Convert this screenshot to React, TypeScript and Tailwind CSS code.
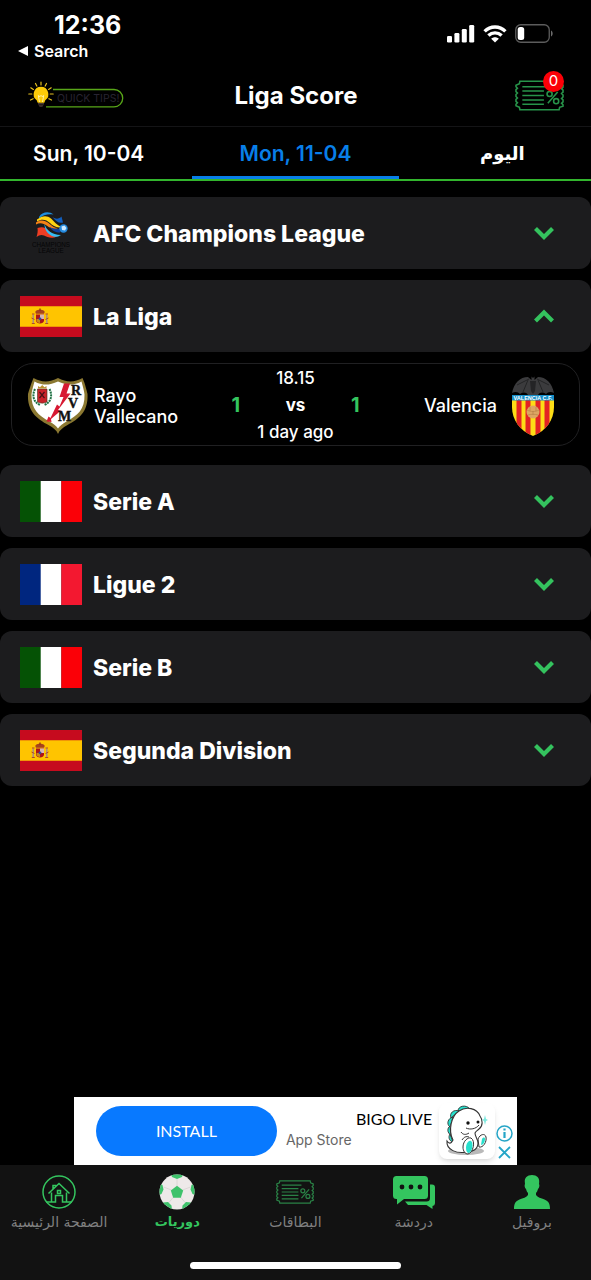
import type { ReactNode } from "react";

const LATIN = "font-['Inter','DejaVu_Sans',sans-serif]";
const ARABIC = "font-['DejaVu_Sans',sans-serif]";

function SignalIcon() {
  return (
    <svg width="28" height="18" viewBox="0 0 28 18" fill="#fff" aria-hidden="true">
      <rect x="0" y="11" width="5" height="6.5" rx="1.3" />
      <rect x="7.4" y="8" width="5" height="9.5" rx="1.3" />
      <rect x="14.8" y="4" width="5" height="13.5" rx="1.3" />
      <rect x="22.2" y="0" width="5" height="17.5" rx="1.3" />
    </svg>
  );
}

function WifiIcon() {
  return (
    <svg width="24" height="18" viewBox="0 0 24 18" fill="none" stroke="#fff" strokeWidth="3.4" aria-hidden="true">
      <path d="M1.600 6.400C7.400.6 16.600.6 22.400 6.400" />
      <path d="M5.400 10.600C9.200 7 14.800 7 18.600 10.600" />
      <path d="M8.200 13.800C10.400 11.800 13.600 11.800 15.800 13.800L12 17.500z" fill="#fff" stroke="none" />
    </svg>
  );
}

function BatteryIcon() {
  return (
    <svg width="38" height="19" viewBox="0 0 38 19" aria-hidden="true">
      <rect x="0.75" y="0.75" width="33.500" height="17.500" rx="5" fill="none" stroke="#5c5c5c" strokeWidth="1.3" />
      <rect x="2.700" y="3" width="6.500" height="13" rx="2.500" fill="#fff" />
      <path d="M36 6.500c2.200.8 2.200 5.200 0 6z" fill="#6b6b6b" />
    </svg>
  );
}

function QuickTipsIcon() {
  return (
    <svg width="96" height="28" viewBox="0 0 96 28" aria-hidden="true">
      <path d="M25 8.500H86a8.700 8.700 0 0 1 0 17.400H18" fill="none" stroke="#58a618" strokeWidth="1.300" />
      <g stroke="#e5c021" strokeWidth="1.200" strokeLinecap="round">
        <path d="M13 1v3M7.500 2.500l1.300 2.600M18.500 2.500l-1.300 2.600M2.800 6.800l2.600 1.600M23.200 6.800l-2.600 1.600M.8 13h3M25.200 13h-3M2.500 19l2.600-1.300M23.500 19l-2.600-1.300" />
      </g>
      <path d="M13 5.800a7.400 7.400 0 0 0-4.300 13.400l1 2.600h6.600l1-2.600A7.400 7.400 0 0 0 13 5.800z" fill="#fccb08" />
      <path d="M11.500 21l-1.200-6.500 1.700 1.200 1-1.400 1 1.400 1.700-1.200-1.200 6.500" fill="none" stroke="#fff0a0" strokeWidth="1" />
      <path d="M10 22h6v1.500h-6zM10.500 24.200h5l-1.200 1.600h-2.600z" fill="#4b3a35" />
      <text x="29" y="20.500" fontSize="10.500" fill="#282431" fontFamily="Inter, sans-serif">QUICK TIPS!</text>
    </svg>
  );
}

function TicketIcon({ className }: { className: string }) {
  return (
    <svg className={className} viewBox="0 0 50 31" fill="none" stroke="currentColor" strokeWidth="1.600" aria-hidden="true">
      <path d="M5 1H45L45.500 3.500 49 5v2l-1.500 1.500L49 10v2l-1.500 1.500L49 15v2l-1.500 1.500L49 20v2l-1.500 1.500L49 25v1.500L45.500 27.500 45 30H5L4.500 27.500 1 26V24.500L2.500 23 1 21.500v-2L2.500 18 1 16.500v-2L2.500 13 1 11.500v-2L2.500 8 1 6.500V5L4.500 3.500z" />
      <path d="M7.500 6.500h26M7.500 11h22M7.500 15.500h22M7.500 20h22M7.500 24.500h22" />
      <path d="M33.500 23.500L43.500 12" />
      <circle cx="35.300" cy="14" r="2.600" />
      <circle cx="42" cy="21.300" r="2.600" />
    </svg>
  );
}

function SpainFlag() {
  return (
    <svg width="62" height="41" viewBox="0 0 62 41" aria-hidden="true">
      <path fill="#c60b1e" d="M0 0h62v41H0z" />
      <path fill="#ffc400" d="M0 10.300h62v20.400H0z" />
      <path d="M16 18.500h8v6c0 4-8 4-8 0z" fill="#ad1519" />
      <path d="M20 18.500h4V23h-4z" fill="#d6b5b4" />
      <path d="M16.500 23h3.500v4c-2 0-3.500-1-3.500-2.500z" fill="#c8891c" />
      <circle cx="20" cy="22.800" r="1.400" fill="#354f93" />
      <path d="M16 17.800c-2-3 1-4 4-4s6 1 4 4z" fill="#a7431d" />
      <path d="M19.400 12.600h1.200v2h-1.200z" fill="#8b1c1a" />
      <path d="M13.200 18.500v8.500M26.800 18.500v8.500" stroke="#aa8f83" strokeWidth="1.500" />
      <path d="M12 18h2.500M25.500 18h2.500M11.800 27.500h3M25.200 27.500h3M11.500 22l3 1.500M28.500 22l-3 1.500" stroke="#b2492a" strokeWidth="1" />
    </svg>
  );
}

function StripeFlag({ colors }: { colors: [string, string, string] }) {
  return (
    <svg width="62" height="41" viewBox="0 0 62 41" aria-hidden="true">
      <path fill={colors[0]} d="M0 0h21v41H0z" />
      <path fill={colors[1]} d="M20.700 0h20.700v41H20.700z" />
      <path fill={colors[2]} d="M41.300 0H62v41H41.300z" />
    </svg>
  );
}

function AfcLogo() {
  return (
    <svg width="62" height="42" viewBox="0 0 62 42" aria-hidden="true">
      <path d="M19 5C22-.2 29-1 33.500 2.500 28 1.500 23 3 19 6.500z" fill="#1e8fe0" />
      <path d="M17 7.500C22 3.500 27 3 31 6.500c3.500 3.500 6 7 11 8.500-5 1.500-9-1-12-4-4-3.500-8-4.500-13-1.500z" fill="#ffd313" />
      <path d="M16 10.500c4-3 9-2.500 12.500.5 3.500 3 6 5 9.500 5-4 2-8 0-11-2.200-3.500-2.500-7-3.300-11-1.300z" fill="#f58216" />
      <path d="M32.500 5c3.500 2.500 6.500 2 9-.5L43 10.500c-4 1-7-1-10.500-5.500z" fill="#125ebd" />
      <path d="M17.500 16c4.500-1.500 8.500-.5 10.500 2 3 3.500 5 5.500 9 6.500-5 2.500-10 .5-13-1-2.500-1.200-5-.5-7.500 1.500 1-3 1.500-6 1-9z" fill="#ef3d23" />
      <path d="M24.500 12c2 6.500 7 10.500 16.500 11-3 2-5.500 2.200-7.500 1.500-6-2-9-6.500-9-12.500z" fill="#35bdf5" />
      <path d="M29.500 15c4 2 8 2.500 11 1l-.5 4.500c-4.500 0-7.500-1.500-10.500-5.500z" fill="#103f9c" />
      <circle cx="43.500" cy="16.500" r="4.200" fill="#248ade" />
      <path d="M41.500 14.500l3-1 2 2.500-1.500 2.500-3-.5z" fill="#cfeaff" />
      <g fill="#050506" fontFamily="Liberation Sans, sans-serif" fontSize="6.300" textAnchor="middle">
        <text x="31" y="35">CHAMPIONS</text>
        <text x="31" y="41">LEAGUE</text>
      </g>
    </svg>
  );
}

function RayoCrest() {
  return (
    <svg width="62" height="58" viewBox="0 0 62 58" aria-hidden="true">
      <path d="M6.500 1c8 4.500 16 4.500 24.500 0 8.500 4.500 16.500 4.500 24.500 0l2 5c1 3 2 7 3 11 1 18-9 25-20 31-5 3-8 5-9.500 9-1.500-4-4.500-6-9.500-9C10 42 0 34 1 17 2 13 3.500 9 4.500 6z" fill="#8b7831" />
      <path d="M7.500 4.500c8 4.300 15 4 23.500 0 8.500 4 15.500 4.300 23.500 0 1 4 2.500 8 3 13 .5 15-7 21-18 27-4 2.200-7 4.500-8.500 7-1.500-2.500-4.500-4.800-8.500-7C11.500 38.500 4 32 4.500 17.500c.5-5 2-9 3-13z" fill="#fff" />
      <path d="M37 6.500h6l-3.500 10h4L31 33l3 .5-10 8.500.5 3-5-.5 2-5 2 1.500 6.500-13.500 2.500 2 4-9.500h-4z" fill="#d71932" />
      <path d="M10.500 12h9.500v13c-3 1.500-6.500 1.500-9.500 0z" fill="#c9222c" stroke="#463719" strokeWidth=".6" />
      <path d="M11 11.500V9l2 1.200L15.200 8l2.300 2.200L19.500 9v2.500z" fill="#ba9131" />
      <path d="M12.500 15l5 6m0-6l-5 6" stroke="#481218" strokeWidth="1.200" />
      <path d="M8 12c-3 6-2 13 5 16M22.500 12c3 6 2 13-5 16" fill="none" stroke="#207245" strokeWidth="2" strokeDasharray="2 .8" />
      <g fill="#111" stroke="#111" strokeWidth=".4" fontFamily="Liberation Serif, serif" fontWeight="700" fontSize="14">
        <text x="44" y="18">R</text>
        <text x="41" y="31">V</text>
        <text x="31" y="44">M</text>
      </g>
    </svg>
  );
}

function ValenciaCrest() {
  return (
    <svg width="44" height="61" viewBox="0 0 44 61" aria-hidden="true">
      <defs>
        <clipPath id="shield">
          <path d="M1 25h42v7c0 13-8 24-21 29C9 56 1 45 1 32z" />
        </clipPath>
      </defs>
      <path d="M1 18C3 8 9 2 17 2l3.500 3V1.500L22 3l1.500-1.500V5L27 2c8 0 14 6 16 16-4-2-6-1-8 1-3-2-6-2-8 1l-5 1-5-1c-2-3-5-3-8-1-2-2-4-3-8-1z" fill="#3b3b3d" />
      <path d="M18 4L6 10M17 5l-5 12M26 4l12 6M27 5l5 12" stroke="#232425" strokeWidth="1" />
      <path d="M19 6h6l-1 10-2 3-2-3z" fill="#242426" />
      <g clipPath="url(#shield)">
        <path d="M0 24h44v37H0z" fill="#fddd16" />
        <path d="M5.500 24h5v37h-5zM14.500 24h5v37h-5zM24.500 24h5v37h-5zM33.500 24h5v37h-5z" fill="#e32324" />
      </g>
      <path d="M1 20h42v5.500H1z" fill="#168fc9" />
      <text x="22" y="25" fill="#fff" fontFamily="Liberation Sans, sans-serif" fontWeight="700" fontSize="5.500" textAnchor="middle">VALENCIA C.F.</text>
      <circle cx="22" cy="37" r="6.500" fill="#dca663" />
      <path d="M16 35c4 2 8 2 12 0M17 40c3-1 7-1 10 0M22 36v4M19 32v4M25 32v4" fill="none" stroke="#b98248" strokeWidth=".7" />
    </svg>
  );
}

function Chevron({ open }: { open: boolean }) {
  return (
    <svg width="22" height="14" viewBox="0 0 22 14" fill="none" stroke="#34c25e" strokeWidth="4.200" aria-hidden="true">
      <path d={open ? "M2.500 12L11 3.500 19.500 12" : "M2.500 2.500L11 11 19.500 2.500"} />
    </svg>
  );
}

function HomeIcon() {
  return (
    <svg width="34" height="34" viewBox="0 0 34 34" fill="none" stroke="#34c55f" strokeWidth="1.500" aria-hidden="true">
      <circle cx="17" cy="17" r="16" />
      <path d="M6.500 18.500L17 8.500l10.500 10M11 14v-3.500h2.500v1.500M4 27h5.500v-9.500M30 27h-5.500v-9.500M9.500 27h4v-6.500h7V27h4" />
      <rect x="15.500" y="15.500" width="3" height="3" />
    </svg>
  );
}

function BallIcon() {
  return (
    <svg width="36" height="36" viewBox="0 0 36 36" aria-hidden="true">
      <defs>
        <clipPath id="ball"><circle cx="18" cy="18" r="17.500" /></clipPath>
      </defs>
      <g clipPath="url(#ball)">
        <path fill="#eee9e9" d="M0 0h36v36H0z" />
        <path d="M18 12V4M23.500 16l8-3M21.500 23l5 6M14.500 23l-5 6M12.500 16l-8-3" stroke="#dcd6d6" strokeWidth="1" />
        <path d="M18 11.800l6.200 4.600-2.400 7.300h-7.600l-2.400-7.300z" fill="#3ec26b" />
        <path d="M12 0h12l-1 3-5 2-5-2zM36 9v12l-2.500-1-2-4.500 1-4.500zM0 9v12l2.500-1 2-4.500-1-4.500zM23 36l.5-4.500 3.500-3.500 5 .5-3 7.500zM13 36l-.5-4.500L9 28l-5 .5L7 36z" fill="#3ec26b" />
      </g>
    </svg>
  );
}

function ChatIcon() {
  return (
    <svg width="42" height="34" viewBox="0 0 42 34" aria-hidden="true">
      <path d="M37 9.500H39a3 3 0 0 1 3 3V28a3 3 0 0 1-2.500 3V34l-6-4H15l-3-3.500h21.500a3.500 3.500 0 0 0 3.500-3.500z" fill="#34c55f" />
      <path d="M3.500 1h28A3.500 3.500 0 0 1 35 4.500v16a3.500 3.500 0 0 1-3.500 3.500H11l-7 5.500V24h-.5A3.500 3.500 0 0 1 0 20.500v-16A3.500 3.500 0 0 1 3.500 1z" fill="#34c55f" />
      <g fill="#121212">
        <circle cx="9" cy="12" r="2.400" />
        <circle cx="18" cy="12" r="2.400" />
        <circle cx="27" cy="12" r="2.400" />
      </g>
    </svg>
  );
}

function ProfileIcon() {
  return (
    <svg width="36" height="34" viewBox="0 0 36 34" fill="#34c55f" aria-hidden="true">
      <path d="M18 0c5 0 7.500 3 7.200 7l-.2 2c.8 1 .3 4-1 5-.5 2-1.200 3-2 4v2c1.500 2.500 5 3 8.500 4.500 4 1.700 5.500 4 5.500 9.500H0c0-5.500 1.500-7.800 5.500-9.500C9 23 12.500 22.500 14 20v-2c-.8-1-1.500-2-2-4-1.300-1-1.800-4-1-5l-.2-2c-.3-4 2.200-7 7.200-7z" />
    </svg>
  );
}

function DinoLogo() {
  return (
    <svg width="56" height="56" viewBox="0 0 56 56" aria-hidden="true">
      <ellipse cx="27" cy="48" rx="18" ry="4" fill="#b9b9b9" />
      <g fill="#27dfcc" stroke="#333" strokeWidth=".9">
        <path d="M19 8c0-5 8-7 12-2zM12 15c-2-5 3-9 8-7zM11 24c-4-3-2-9 3-10zM12 32c-4-2-4-7-1-9zM14 39c-4-1-5-5-3-8z" />
      </g>
      <path d="M14 37C9 28 12 13 20 8c7-5 18-3 21 5 3 4 3 10-1 13-2 2-3 2-4 4 0 4 3 6 3 10 0 6-5 9-11 9-10 2-21-2-20-11 2 3 4 3 6-1z" fill="#fff" stroke="#333" strokeWidth="1.100" />
      <path d="M39 36c2-5 7-6 8-2 1 5-3 11-7 10z" fill="#fff" stroke="#333" strokeWidth="1" />
      <path d="M43 36c1-2 3-2 3 0 0 3-2 6-4 6z" fill="#27dfcc" />
      <path d="M24 44c0-6 5-10 8-9 5 3 2 15-3 16-3 0-5-3-5-7z" fill="#fff" stroke="#333" strokeWidth="1" />
      <path d="M27 45c0-5 3-8 5-7 3 2 1 11-2 12-2 0-3-2-3-5z" fill="#27dfcc" />
      <circle cx="29" cy="20" r="1.700" fill="#111" />
      <circle cx="39" cy="19" r="1.500" fill="#111" />
      <path d="M27 25c4 2 10 1 13-3M22 29c2 3 5 3 8 1m-7 7c2-3 4-4 7-3" fill="none" stroke="#333" strokeWidth="1" />
      <path d="M46 12l1 4 2 1-2 1-1 4-1-4-2-1 2-1z" fill="#7de9df" />
    </svg>
  );
}

const italy = <StripeFlag colors={["#055205", "#ffffff", "#fb0007"]} />;
const france = <StripeFlag colors={["#00267f", "#ffffff", "#f31830"]} />;

function League({ name, logo, open = false }: { name: string; logo: ReactNode; open?: boolean }) {
  return (
    <button
      type="button"
      aria-expanded={open}
      className="flex h-18 w-full items-center gap-[11px] rounded-xl bg-[#1c1c1e] pr-9 pl-5 text-left"
    >
      {logo}
      <span className="flex-1 pt-[2px] text-[23px] leading-7 font-extrabold">{name}</span>
      <Chevron open={open} />
    </button>
  );
}

function Match() {
  return (
    <article className="mx-[11px] mb-2 grid h-[83px] grid-cols-[1fr_128px_1fr] items-center rounded-[22px] border border-[#202022] px-[15px] pt-[2px] text-[18px] leading-[21px] font-medium">
      <div className="flex items-center gap-[5px]">
        <RayoCrest />
        <span className="w-24">Rayo Vallecano</span>
      </div>
      <div className="grid gap-[6px] text-center text-[17px]">
        <span>18.15</span>
        <div className="flex items-center justify-between font-bold">
          <span className="text-[20px] text-[#34c55f]">1</span>
          <span>vs</span>
          <span className="text-[20px] text-[#34c55f]">1</span>
        </div>
        <span>1 day ago</span>
      </div>
      <div className="flex items-center justify-end gap-[14px] pr-[9px]">
        <span>Valencia</span>
        <ValenciaCrest />
      </div>
    </article>
  );
}

const days = [
  { label: "Sun, 10-04", active: false },
  { label: "Mon, 11-04", active: true },
  { label: "اليوم", active: false, arabic: true },
];

const navItems = [
  { label: "الصفحة الرئيسية", icon: <HomeIcon />, active: false },
  { label: "دوريات", icon: <BallIcon />, active: true },
  { label: "البطاقات", icon: <TicketIcon className="h-6 w-[38px] text-[#2a8146]" />, active: false },
  { label: "دردشة", icon: <ChatIcon />, active: false },
  { label: "بروفيل", icon: <ProfileIcon />, active: false },
];

export default function App() {
  return (
    <div className={`${LATIN} flex min-h-screen flex-col bg-black text-white`}>
      <div className="flex h-16 items-start justify-between pt-[9px] pr-[38px] pl-[18px]">
        <div className="flex flex-col">
          <span className="pl-9 text-[25px] leading-8 font-bold">12:36</span>
          <a href="#search" className="flex items-center gap-[6px] text-[16px] leading-5 font-semibold">
            <svg width="10" height="10" viewBox="0 0 10 10" fill="#fff" aria-hidden="true"><path d="M0 5L10 0v10z" /></svg>
            Search
          </a>
        </div>
        <div className="flex items-center gap-2 pt-[15px]">
          <SignalIcon />
          <WifiIcon />
          <BatteryIcon />
        </div>
      </div>

      <header className="grid h-[63px] grid-cols-[1fr_auto_1fr] items-center border-b border-[#141416] pr-[27px] pl-7">
        <button type="button" aria-label="Quick tips"><QuickTipsIcon /></button>
        <h1 className="pt-[2px] text-[24px] leading-7 font-bold">Liga Score</h1>
        <button type="button" aria-label="Tickets" className="relative justify-self-end">
          <TicketIcon className="h-[31px] w-[49px] text-[#27944a]" />
          <span className="absolute -top-[9px] right-0 flex size-[21px] items-center justify-center rounded-full bg-[#fb0007] text-[15px] leading-5">0</span>
        </button>
      </header>

      <div role="tablist" className="flex h-[54px] justify-center overflow-hidden border-b-2 border-[#32b52d] text-[21px]">
        {days.map((day) => (
          <button
            key={day.label}
            type="button"
            role="tab"
            aria-selected={day.active}
            className={
              day.active
                ? "relative z-10 -mb-[2px] h-[54px] w-[35%] shrink-0 border-b-[5px] border-[#087fe9] pt-1 leading-[44px] font-semibold text-[#087fe9]"
                : "h-[52px] w-[35%] shrink-0 pt-1 pb-[3px] leading-[44px] font-semibold"
            }
          >
            {day.arabic ? <span className="text-[18px]">{day.label}</span> : day.label}
          </button>
        ))}
      </div>

      <main className="flex flex-1 flex-col gap-[11px] pt-4 pb-6">
        <League name="AFC Champions League" logo={<AfcLogo />} />
        <League name="La Liga" logo={<SpainFlag />} open />
        <Match />
        <League name="Serie A" logo={italy} />
        <League name="Ligue 2" logo={france} />
        <League name="Serie B" logo={italy} />
        <League name="Segunda Division" logo={<SpainFlag />} />
      </main>

      <aside className="mx-auto flex h-[68px] w-3/4 items-center bg-white pr-1 pl-[22px] text-black">
        <button type="button" className="h-[50px] w-[181px] shrink-0 rounded-full bg-[#0879ff] font-['Lato',sans-serif] text-[16px] text-white">INSTALL</button>
        <div className="flex flex-1 flex-col pr-[7px] pb-1 pl-[9px]">
          <span className="self-end font-['Lato',sans-serif] text-[16px] leading-[22px]">BIGO LIVE</span>
          <span className="text-[14px] leading-5 text-[#666]">App Store</span>
        </div>
        <div className="rounded-lg bg-white shadow-md"><DinoLogo /></div>
        <div className="flex flex-col items-center gap-1 self-end pb-[6px] pl-[1px]">
          <a href="#ad-info" aria-label="Ad information">
            <svg className="block" width="17" height="17" viewBox="0 0 17 17" fill="none" stroke="#25a5c7" strokeWidth="1.500" aria-hidden="true">
              <circle cx="8.500" cy="8.500" r="7.500" />
              <path d="M8.500 3.500v2M8.500 7v6" strokeWidth="2.200" />
            </svg>
          </a>
          <button type="button" aria-label="Close ad">
            <svg width="13" height="13" viewBox="0 0 13 13" stroke="#25a5c7" strokeWidth="1.800" aria-hidden="true"><path d="M1 1l11 11M12 1L1 12" /></svg>
          </button>
        </div>
      </aside>

      <footer className="flex h-[115px] flex-col items-center justify-between bg-[#121212] pb-[11px]">
        <nav className="grid w-full grid-cols-5 pt-[9px]">
          {navItems.map((item) => (
            <a
              key={item.label}
              href={`#${item.label}`}
              className={
                item.active
                  ? `${ARABIC} flex flex-col items-center gap-[2px] text-[13px] leading-5 font-bold whitespace-nowrap text-[#34c55f]`
                  : `${ARABIC} flex flex-col items-center gap-[2px] text-[14px] leading-5 whitespace-nowrap text-[#808080]`
              }
            >
              <span className="flex h-9 items-center">{item.icon}</span>
              {item.label}
            </a>
          ))}
        </nav>
        <div className="h-[7px] w-[211px] rounded-full bg-white" />
      </footer>
    </div>
  );
}
